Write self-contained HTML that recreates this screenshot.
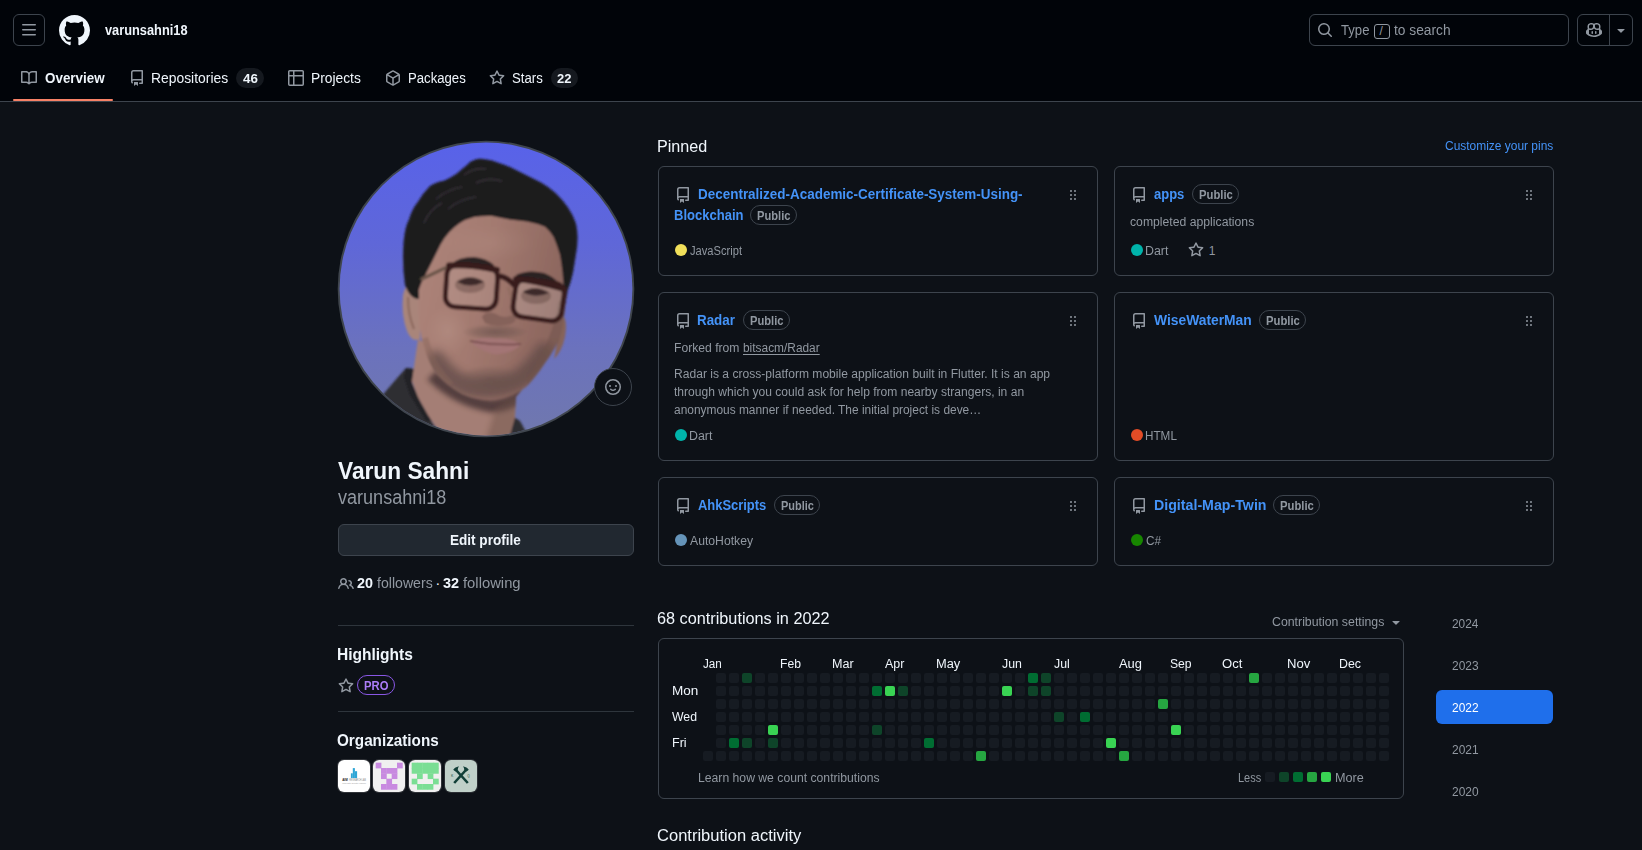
<!DOCTYPE html>
<html lang="en">
<head>
<meta charset="utf-8">
<title>varunsahni18 (Varun Sahni)</title>
<style>
*{box-sizing:border-box;margin:0;padding:0}
html,body{width:1642px;height:850px;overflow:hidden;background:#0d1117}
body{position:relative;font-family:"Liberation Sans",sans-serif;font-size:14px;color:#f0f6fc;line-height:1}
a{text-decoration:none}
.abs{position:absolute;display:block}
.t{position:absolute;white-space:nowrap;line-height:1;display:block;transform-origin:0 0}
.card{position:absolute;border:1px solid #3d444d;border-radius:6px}
.pill{position:absolute;border:1px solid #3d444d;border-radius:10px}
.cnt{position:absolute;height:20px;border-radius:10px;background:#15191f}
.d{position:absolute;width:10px;height:10px;border-radius:2px;background:#161b22}
.l1{background:#0e4429}.l2{background:#006d32}.l3{background:#26a641}.l4{background:#39d353}
.dot{position:absolute;width:12px;height:12px;border-radius:50%}
</style>
</head>
<body>
<div class="abs" style="left:0px;top:0px;width:1642px;height:101px;background:#010409"></div>
<div class="abs" style="left:0px;top:101px;width:1642px;height:1px;background:#3d444d"></div>
<div class="abs" style="left:13px;top:14px;width:32px;height:32px;border:1px solid #3d444d;border-radius:6px"></div>
<svg class="abs" style="left:21px;top:22px;fill:#9198a1" width="16" height="16" viewBox="0 0 16 16"><path d="M1 2.75A.75.75 0 0 1 1.75 2h12.5a.75.75 0 0 1 0 1.5H1.75A.75.75 0 0 1 1 2.75Zm0 5A.75.75 0 0 1 1.75 7h12.5a.75.75 0 0 1 0 1.5H1.75A.75.75 0 0 1 1 7.75ZM1.75 12h12.5a.75.75 0 0 1 0 1.5H1.75a.75.75 0 0 1 0-1.5Z"/></svg>
<svg class="abs" style="left:58.5px;top:14.5px;fill:#f0f6fc" width="31" height="31" viewBox="0 0 16 16"><path d="M8 0c4.42 0 8 3.58 8 8a8.013 8.013 0 0 1-5.45 7.59c-.4.08-.55-.17-.55-.38 0-.27.01-1.13.01-2.2 0-.75-.25-1.23-.54-1.48 1.78-.2 3.65-.88 3.65-3.95 0-.88-.31-1.59-.82-2.15.08-.2.36-1.02-.08-2.12 0 0-.67-.22-2.2.82-.64-.18-1.32-.27-2-.27-.68 0-1.36.09-2 .27-1.53-1.03-2.2-.82-2.2-.82-.44 1.1-.16 1.92-.08 2.12-.51.56-.82 1.28-.82 2.15 0 3.06 1.86 3.75 3.64 3.95-.23.2-.44.55-.51 1.07-.46.21-1.61.55-2.33-.66-.15-.24-.6-.83-1.23-.82-.67.01-.27.38.01.53.34.19.73.9.82 1.13.16.45.68 1.31 2.69.94 0 .67.01 1.3.01 1.49 0 .21-.15.45-.55.38A7.995 7.995 0 0 1 0 8c0-4.42 3.58-8 8-8Z"/></svg>
<span class="t" id="t0" style="left:104.82px;top:23.14px;font-size:14.00px;color:#f0f6fc;font-weight:bold;transform:scaleX(0.9144);">varunsahni18</span>
<svg class="abs" style="left:21px;top:70px;fill:#9198a1" width="16" height="16" viewBox="0 0 16 16"><path d="M0 1.75A.75.75 0 0 1 .75 1h4.253c1.227 0 2.317.59 3 1.501A3.743 3.743 0 0 1 11.006 1h4.245a.75.75 0 0 1 .75.75v10.5a.75.75 0 0 1-.75.75h-4.507a2.25 2.25 0 0 0-1.591.659l-.622.621a.75.75 0 0 1-1.06 0l-.622-.621A2.25 2.25 0 0 0 5.258 13H.75a.75.75 0 0 1-.75-.75Zm7.251 10.324.004-5.073-.002-2.253A2.25 2.25 0 0 0 5.003 2.5H1.5v9h3.757a3.75 3.75 0 0 1 1.994.574ZM8.755 4.75l-.004 7.322a3.752 3.752 0 0 1 1.992-.572H14.5v-9h-3.495a2.25 2.25 0 0 0-2.25 2.25Z"/></svg>
<span class="t" id="t1" style="left:45.00px;top:70.84px;font-size:14.00px;color:#f0f6fc;font-weight:bold;transform:scaleX(0.9572);">Overview</span>
<div class="abs" style="left:13px;top:99px;width:100px;height:2px;background:#f78166;border-radius:2px"></div>
<svg class="abs" style="left:129px;top:70px;fill:#9198a1" width="16" height="16" viewBox="0 0 16 16"><path d="M2 2.5A2.5 2.5 0 0 1 4.5 0h8.75a.75.75 0 0 1 .75.75v12.5a.75.75 0 0 1-.75.75h-2.5a.75.75 0 0 1 0-1.5h1.75v-2h-8a1 1 0 0 0-.714 1.7.75.75 0 1 1-1.072 1.05A2.495 2.495 0 0 1 2 11.5Zm10.5-1h-8a1 1 0 0 0-1 1v6.708A2.486 2.486 0 0 1 4.5 9h8ZM5 12.25a.25.25 0 0 1 .25-.25h3.5a.25.25 0 0 1 .25.25v3.25a.25.25 0 0 1-.4.2l-1.45-1.087a.249.249 0 0 0-.3 0L5.4 15.7a.25.25 0 0 1-.4-.2Z"/></svg>
<span class="t" id="t2" style="left:150.86px;top:70.84px;font-size:14.00px;color:#f0f6fc;transform:scaleX(0.9911);">Repositories</span>
<div class="cnt" style="left:236px;top:68px;width:28px"></div>
<span class="t" id="t3" style="left:242.82px;top:72.83px;font-size:12.00px;color:#f0f6fc;font-weight:bold;transform:scaleX(1.1162);">46</span>
<svg class="abs" style="left:288px;top:70px;fill:#9198a1" width="16" height="16" viewBox="0 0 16 16"><path d="M0 1.75C0 .784.784 0 1.75 0h12.5C15.216 0 16 .784 16 1.75v12.5A1.75 1.75 0 0 1 14.25 16H1.75A1.75 1.75 0 0 1 0 14.25ZM6.5 6.5v8h7.75a.25.25 0 0 0 .25-.25V6.5Zm8-1.5V1.75a.25.25 0 0 0-.25-.25H6.5V5Zm-13 1.5v7.75c0 .138.112.25.25.25H5v-8ZM5 5V1.5H1.75a.25.25 0 0 0-.25.25V5Z"/></svg>
<span class="t" id="t4" style="left:310.68px;top:70.84px;font-size:14.00px;color:#f0f6fc;transform:scaleX(0.9858);">Projects</span>
<svg class="abs" style="left:384.5px;top:70px;fill:#9198a1" width="16" height="16" viewBox="0 0 16 16"><path d="m8.878.392 5.25 3.045c.54.314.872.89.872 1.514v6.098a1.75 1.75 0 0 1-.872 1.514l-5.25 3.045a1.75 1.75 0 0 1-1.756 0l-5.25-3.045A1.75 1.75 0 0 1 1 11.049V4.951c0-.624.332-1.201.872-1.514L7.122.392a1.75 1.75 0 0 1 1.756 0ZM7.875 1.69l-4.63 2.685L8 7.133l4.755-2.758-4.63-2.685a.248.248 0 0 0-.25 0ZM2.5 5.677v5.372c0 .09.047.171.125.216l4.625 2.683V8.432Zm6.25 8.271 4.625-2.683a.25.25 0 0 0 .125-.216V5.677L8.75 8.432Z"/></svg>
<span class="t" id="t5" style="left:407.95px;top:70.84px;font-size:14.00px;color:#f0f6fc;transform:scaleX(0.9393);">Packages</span>
<svg class="abs" style="left:489px;top:70px;fill:#9198a1" width="16" height="16" viewBox="0 0 16 16"><path d="M8 .25a.75.75 0 0 1 .673.418l1.882 3.815 4.21.612a.75.75 0 0 1 .416 1.279l-3.046 2.97.719 4.192a.751.751 0 0 1-1.088.791L8 12.347l-3.766 1.98a.75.75 0 0 1-1.088-.79l.72-4.194L.818 6.374a.75.75 0 0 1 .416-1.28l4.21-.611L7.327.668A.75.75 0 0 1 8 .25Zm0 2.445L6.615 5.5a.75.75 0 0 1-.564.41l-3.097.45 2.24 2.184a.75.75 0 0 1 .216.664l-.528 3.084 2.769-1.456a.75.75 0 0 1 .698 0l2.77 1.456-.53-3.084a.75.75 0 0 1 .216-.664l2.24-2.183-3.096-.45a.75.75 0 0 1-.564-.41L8 2.694Z"/></svg>
<span class="t" id="t6" style="left:511.79px;top:70.84px;font-size:14.00px;color:#f0f6fc;transform:scaleX(0.9408);">Stars</span>
<div class="cnt" style="left:551px;top:68px;width:26.5px"></div>
<span class="t" id="t7" style="left:556.56px;top:72.83px;font-size:12.00px;color:#f0f6fc;font-weight:bold;transform:scaleX(1.0806);">22</span>
<div class="abs" style="left:1309px;top:14px;width:260px;height:32px;border:1px solid #3d444d;border-radius:6px"></div>
<svg class="abs" style="left:1316.5px;top:22px;fill:#9198a1" width="16" height="16" viewBox="0 0 16 16"><path d="M10.68 11.74a6 6 0 0 1-7.922-8.982 6 6 0 0 1 8.982 7.922l3.04 3.04a.749.749 0 0 1-.326 1.275.749.749 0 0 1-.734-.215ZM11.5 7a4.499 4.499 0 1 0-8.997 0A4.499 4.499 0 0 0 11.5 7Z"/></svg>
<span class="t" id="t8" style="left:1341.21px;top:23.14px;font-size:14.00px;color:#9198a1;transform:scaleX(0.9369);">Type</span>
<div class="abs" style="left:1374px;top:23.5px;width:16px;height:15px;border:1px solid #9198a1;border-radius:3px"></div>
<span class="t" id="t9" style="left:1379.60px;top:24.83px;font-size:12.00px;color:#9198a1;">/</span>
<span class="t" id="t10" style="left:1393.91px;top:23.14px;font-size:14.00px;color:#9198a1;transform:scaleX(0.9838);">to search</span>
<div class="abs" style="left:1577px;top:14px;width:56px;height:32px;border:1px solid #3d444d;border-radius:6px"></div>
<div class="abs" style="left:1609px;top:14px;width:1px;height:32px;background:#3d444d"></div>
<svg class="abs" style="left:1586px;top:22px;fill:#9198a1" width="16" height="16" viewBox="0 0 16 16"><path d="M7.998 15.035c-4.562 0-7.873-2.914-7.998-3.749V9.338c.085-.628.677-1.686 1.588-2.065.013-.07.024-.143.036-.218.029-.183.06-.384.126-.612-.201-.508-.254-1.084-.254-1.656 0-.87.128-1.769.693-2.484.579-.733 1.494-1.124 2.724-1.261 1.206-.134 2.262.034 2.944.765.05.053.096.108.139.165.044-.057.094-.112.143-.165.682-.731 1.738-.899 2.944-.765 1.23.137 2.145.528 2.724 1.261.566.715.693 1.614.693 2.484 0 .572-.053 1.148-.254 1.656.066.228.098.429.126.612.012.076.024.148.037.218.924.385 1.522 1.471 1.591 2.095v1.872c0 .766-3.351 3.795-8.002 3.795Zm0-1.485c2.28 0 4.584-1.11 5.002-1.433V7.862l-.023-.116c-.49.21-1.075.291-1.727.291-1.146 0-2.059-.327-2.71-.991A3.222 3.222 0 0 1 8 6.303a3.24 3.24 0 0 1-.544.743c-.65.664-1.563.991-2.71.991-.652 0-1.236-.081-1.727-.291l-.023.116v4.255c.419.323 2.722 1.433 5.002 1.433ZM6.762 2.83c-.193-.206-.637-.413-1.682-.297-1.019.113-1.479.404-1.713.7-.247.312-.369.789-.369 1.554 0 .793.129 1.171.308 1.371.162.181.519.379 1.442.379.853 0 1.339-.235 1.638-.54.315-.322.527-.827.617-1.553.117-.935-.037-1.395-.241-1.614Zm4.155-.297c-1.044-.116-1.488.091-1.681.297-.204.219-.359.679-.242 1.614.091.726.303 1.231.618 1.553.299.305.784.54 1.638.54.922 0 1.28-.198 1.442-.379.179-.2.308-.578.308-1.371 0-.765-.123-1.242-.37-1.554-.233-.296-.693-.587-1.713-.7ZM6.25 9.037a.75.75 0 0 1 .75.75v1.501a.75.75 0 0 1-1.5 0V9.787a.75.75 0 0 1 .75-.75Zm4.25.75v1.501a.75.75 0 0 1-1.5 0V9.787a.75.75 0 0 1 1.5 0Z"/></svg>
<svg class="abs" style="left:1613px;top:22px;fill:#9198a1" width="16" height="16" viewBox="0 0 16 16"><path d="m4.427 7.427 3.396 3.396a.25.25 0 0 0 .354 0l3.396-3.396A.25.25 0 0 0 11.396 7H4.604a.25.25 0 0 0-.177.427Z"/></svg>
<svg class="abs" style="left:336px;top:139px" width="300" height="300" viewBox="0 0 300 300">
<defs>
<linearGradient id="bg" x1="0" y1="0" x2="0" y2="1"><stop offset="0" stop-color="#5862ea"/><stop offset=".35" stop-color="#5f67d8"/><stop offset=".7" stop-color="#6b72bd"/><stop offset="1" stop-color="#7078ad"/></linearGradient>
<linearGradient id="skin" x1="0" y1="0" x2="1" y2=".3"><stop offset="0" stop-color="#ae857b"/><stop offset=".5" stop-color="#a37a70"/><stop offset="1" stop-color="#8c665e"/></linearGradient>
<radialGradient id="beard" cx=".5" cy=".5" r=".5"><stop offset="0" stop-color="#5f4a46" stop-opacity=".8"/><stop offset=".6" stop-color="#6a544e" stop-opacity=".5"/><stop offset="1" stop-color="#705a52" stop-opacity="0"/></radialGradient>
<radialGradient id="hl" cx=".5" cy=".5" r=".5"><stop offset="0" stop-color="#bc988c" stop-opacity=".7"/><stop offset="1" stop-color="#bc988c" stop-opacity="0"/></radialGradient>
<clipPath id="fc"><path d="M83 140 Q81 172 85 198 Q89 216 98 232 Q110 246 126 255 Q142 262 158 261 Q176 258 190 248 Q200 238 209 224 Q220 210 225 192 Q230 172 230 150 L228 110 L200 72 L130 70 L92 104Z"/></clipPath>
<clipPath id="nc"><path d="M82 200 L80 214 L76 242 L82 258 L92 276 L108 300 L173 300 L179 278 L180 258 L190 246 L140 236Z"/></clipPath>
<filter id="bl4" x="-20%" y="-40%" width="140%" height="180%"><feGaussianBlur stdDeviation="2.500"/></filter>
<clipPath id="cc"><circle cx="150" cy="150" r="146.4"/></clipPath>
<filter id="bl3" x="-20%" y="-40%" width="140%" height="180%"><feGaussianBlur stdDeviation="4"/></filter>
<filter id="bl" x="-5%" y="-5%" width="110%" height="110%"><feGaussianBlur stdDeviation=".8"/></filter>
</defs>
<circle cx="150" cy="150" r="148.3" fill="#3f454d"/>
<g clip-path="url(#cc)">
<rect width="300" height="300" fill="url(#bg)"/>
<g filter="url(#bl)">
<!-- shirt -->
<path d="M36 268 L50 252 L62 238 L70 229 L78 230 L76 244 L84 262 L94 280 L108 300 L30 300Z" fill="#2f2e33"/>
<path d="M70 229 L78 230 L76 244 L84 262 L96 282 L90 282 L74 256 L68 238Z" fill="#232226"/>
<path d="M172 300 L178 278 L184 282 L194 300Z" fill="#2f2e33"/>
<!-- neck -->
<path d="M82 200 L80 214 L76 242 L82 258 L92 276 L108 300 L173 300 L179 278 L180 258 L190 246 L140 236Z" fill="#a47e74"/>
<g clip-path="url(#nc)"><path d="M96 236 Q122 262 156 267 Q180 265 196 248" stroke="#3a2c2e" stroke-width="13" fill="none" opacity=".75" filter="url(#bl4)"/><path d="M150 300 L160 268 L182 256 L180 300Z" fill="#6e5248" opacity=".45" filter="url(#bl4)"/></g>
<!-- ears -->
<path d="M84 148 Q70 140 67 156 Q65 176 71 192 Q76 204 84 200Z" fill="#a9857a"/>
<path d="M72 158 Q72 176 78 190" stroke="#8a675c" stroke-width="2" fill="none"/>
<path d="M226 176 Q232 180 229 198 Q226 212 218 220Z" fill="#86645a"/>
<!-- face -->
<path d="M83 140 Q81 172 85 198 Q89 216 98 232 Q110 246 126 255 Q142 262 158 261 Q176 258 190 248 Q200 238 209 224 Q220 210 225 192 Q230 172 230 150 L228 110 L200 72 L130 70 L92 104Z" fill="url(#skin)"/>
<ellipse cx="152" cy="104" rx="48" ry="18" fill="url(#hl)" opacity=".3"/>
<ellipse cx="112" cy="192" rx="22" ry="26" fill="url(#hl)" opacity=".6"/>
<!-- stubble shading -->
<g clip-path="url(#fc)"><path d="M100 222 Q112 240 130 247 Q158 254 184 240 Q200 228 208 214" stroke="#5e4a46" stroke-width="20" fill="none" opacity=".75" filter="url(#bl3)" stroke-linecap="round"/></g>
<ellipse cx="154" cy="240" rx="34" ry="14" fill="url(#beard)" opacity=".6"/>
<ellipse cx="159" cy="193" rx="33" ry="8" fill="url(#beard)" opacity=".75"/>
<path d="M192 246 Q210 224 222 204 Q230 180 230 150 L222 164 Q218 200 190 240Z" fill="#6e5249" opacity=".5"/>
<path d="M86 200 Q92 226 112 246 L118 244 Q98 224 92 198Z" fill="#866458" opacity=".45"/>
<!-- hair -->
<path d="M69 146 Q66 124 67.700 102 Q69 88 73 80.600 Q76 70 81.800 63 Q87 54 94 47 Q100 43 108 41.800 Q114 39 120.600 34.700 Q126 30 131 26 Q134 22 138.300 21 Q143 19 149 20.200 Q156 21 163 24 Q170 26 177 29.400 L191 36.500 L205 43.500 Q213 48 219.500 54 Q226 60 231.800 68.300 Q237 76 239.800 84 Q241.500 91 241.500 98.300 Q241.500 108 239.800 116 L237 133.600 Q235 143 231.800 151 L229 166 Q228 150 226.500 133.600 Q225.500 124 224 116 Q221 106 217.700 98.300 Q214 92 209 87.700 Q200 84 191 82.400 L173.600 80.600 Q164 78.600 156 77 Q147 76.600 138.300 78 Q130 80 124 84 Q118 88 113.500 93 Q108 99 104.700 105.300 L97.700 119.400 L90.600 133.600 L85.300 144 L82.700 151 L83 160 Q74 160 69 146Z" fill="#1d1a1f"/>
<g stroke="#3b363c" stroke-width="1.6" fill="none" opacity=".8"><path d="M100 60 Q112 50 126 48"/><path d="M128 36 Q138 28 150 30"/><path d="M140 44 Q152 38 166 42"/><path d="M88 84 Q94 70 106 64"/><path d="M112 70 Q124 60 140 58"/></g>
<!-- brows -->
<path d="M116 125 Q122 118 138 118 Q150 119 158 126 L156 130 Q142 124 128 125 Q120 126 117 129Z" fill="#2a2022"/>
<path d="M180 136 Q192 130 208 134 Q216 137 222 143 L220 146 Q208 140 196 139 Q188 139 182 141Z" fill="#2a2022"/>
<!-- lenses tint -->
<rect x="110" y="127" width="51" height="42" rx="10" fill="#fff" opacity=".10" transform="rotate(4 135 148)"/>
<rect x="178" y="142" width="49" height="38" rx="10" fill="#fff" opacity=".17" transform="rotate(8 202 162)"/>
<!-- eyes -->
<path d="M121 143 Q134 134 148 143 Q134 150 121 143Z" fill="#2a1c1e"/><ellipse cx="134" cy="146" rx="15" ry="8" fill="#5a403c" opacity=".4"/>
<path d="M187 153 Q199 145 213 154 Q199 160 187 153Z" fill="#2a1c1e"/><ellipse cx="200" cy="157" rx="15" ry="8" fill="#5a403c" opacity=".4"/>
<!-- nose -->
<path d="M146 178 Q150 171 160 175 Q168 181 179 175 Q182 182 175 185 Q160 189 149 184Z" fill="#85625a"/>
<path d="M172 148 Q177 162 179 174" stroke="#8e6a5e" stroke-width="3" fill="none" opacity=".6"/>
<!-- mouth -->
<path d="M134 202 Q148 197 160 199.500 Q172 198 185 205 Q178 214 160 215.500 Q144 213 134 202Z" fill="#a37474"/>
<path d="M134 202 Q160 207 185 205" stroke="#6e4646" stroke-width="1.600" fill="none"/>
<!-- glasses -->
<path d="M109 129 L86 140" stroke="#6a5548" stroke-width="3.400" fill="none" stroke-linecap="round"/>
<g fill="none" stroke="#371c1d" stroke-width="4.800" stroke-linejoin="round" stroke-linecap="round">
<rect x="110" y="127" width="51" height="42" rx="10" transform="rotate(4 135 148)"/>
<rect x="178" y="142" width="49" height="38" rx="10" transform="rotate(8 202 162)"/>
<path d="M113 126.500 Q136 125 161 131" stroke-width="6"/>
<path d="M180 140 Q202 142 228 150" stroke-width="6"/>
<path d="M162 137 Q170 137 178 146" stroke-width="5.500"/>
</g>
</g>
</g></svg>

<div class="abs" style="left:594px;top:368px;width:38px;height:38px;border:1px solid #3d444d;border-radius:50%;background:#0d1117"></div>
<svg class="abs" style="left:605px;top:379px;fill:#9198a1" width="16" height="16" viewBox="0 0 16 16"><path d="M8 0a8 8 0 1 1 0 16A8 8 0 0 1 8 0ZM1.5 8a6.5 6.5 0 1 0 13 0 6.5 6.5 0 0 0-13 0Zm3.82 1.636a.75.75 0 0 1 1.038.175l.007.009c.103.118.22.222.35.31.264.178.683.37 1.285.37.602 0 1.02-.192 1.285-.371.13-.088.247-.192.35-.31l.007-.008a.75.75 0 0 1 1.222.87l-.614-.431c.614.43.614.431.613.431v.001l-.001.002-.002.003-.005.007-.014.019a2.066 2.066 0 0 1-.184.213c-.16.166-.338.316-.53.445-.63.418-1.37.638-2.127.629-.946 0-1.652-.308-2.126-.63a3.331 3.331 0 0 1-.715-.657l-.014-.02-.005-.006-.002-.003v-.002h-.001l.613-.432-.614.43a.75.75 0 0 1 .183-1.044ZM12 7a1 1 0 1 1-2 0 1 1 0 0 1 2 0ZM5 8a1 1 0 1 1 0-2 1 1 0 0 1 0 2Z"/></svg>
<span class="t" id="t11" style="left:337.71px;top:458.88px;font-size:24.00px;color:#f0f6fc;font-weight:bold;transform:scaleX(0.9459);">Varun Sahni</span>
<span class="t" id="t12" style="left:337.82px;top:486.66px;font-size:20.00px;color:#9198a1;transform:scaleX(0.9021);">varunsahni18</span>
<div class="abs" style="left:338px;top:524px;width:296px;height:32px;border:1px solid #3d444d;border-radius:6px;background:#212830"></div>
<span class="t" id="t13" style="left:450.38px;top:533.14px;font-size:14.00px;color:#f0f6fc;font-weight:bold;transform:scaleX(0.9681);">Edit profile</span>
<svg class="abs" style="left:338px;top:575.5px;fill:#9198a1" width="16" height="16" viewBox="0 0 16 16"><path d="M2 5.5a3.5 3.5 0 1 1 5.898 2.549 5.508 5.508 0 0 1 3.034 4.084.75.75 0 1 1-1.482.235 4 4 0 0 0-7.9 0 .75.75 0 0 1-1.482-.236A5.507 5.507 0 0 1 3.102 8.05 3.493 3.493 0 0 1 2 5.5ZM11 4a3.001 3.001 0 0 1 2.22 5.018 5.01 5.01 0 0 1 2.56 3.012.749.749 0 0 1-.885.954.752.752 0 0 1-.549-.514 3.507 3.507 0 0 0-2.522-2.372.75.75 0 0 1-.574-.73v-.352a.75.75 0 0 1 .416-.672A1.5 1.5 0 0 0 11 5.5.75.75 0 0 1 11 4Zm-5.5-.5a2 2 0 1 0-.001 3.999A2 2 0 0 0 5.500 3.500Z"/></svg>
<span class="t" id="t14" style="left:357.22px;top:576.14px;font-size:14.00px;color:#f0f6fc;font-weight:bold;transform:scaleX(1.0232);">20</span>
<span class="t" id="t15" style="left:377.13px;top:576.14px;font-size:14.00px;color:#9198a1;transform:scaleX(1.0080);">followers</span>
<span class="t" id="t16" style="left:435.40px;top:576.14px;font-size:14.00px;color:#f0f6fc;">·</span>
<span class="t" id="t17" style="left:442.76px;top:576.14px;font-size:14.00px;color:#f0f6fc;font-weight:bold;transform:scaleX(1.0298);">32</span>
<span class="t" id="t18" style="left:462.89px;top:576.14px;font-size:14.00px;color:#9198a1;transform:scaleX(1.0575);">following</span>
<div class="abs" style="left:338px;top:625px;width:296px;height:1px;background:#3d444db3"></div>
<span class="t" id="t19" style="left:336.96px;top:646.75px;font-size:16.00px;color:#f0f6fc;font-weight:bold;transform:scaleX(0.9704);">Highlights</span>
<svg class="abs" style="left:338px;top:677.5px;fill:#9198a1" width="16" height="16" viewBox="0 0 16 16"><path d="M8 .25a.75.75 0 0 1 .673.418l1.882 3.815 4.21.612a.75.75 0 0 1 .416 1.279l-3.046 2.97.719 4.192a.751.751 0 0 1-1.088.791L8 12.347l-3.766 1.98a.75.75 0 0 1-1.088-.79l.72-4.194L.818 6.374a.75.75 0 0 1 .416-1.28l4.21-.611L7.327.668A.75.75 0 0 1 8 .25Zm0 2.445L6.615 5.5a.75.75 0 0 1-.564.41l-3.097.45 2.24 2.184a.75.75 0 0 1 .216.664l-.528 3.084 2.769-1.456a.75.75 0 0 1 .698 0l2.77 1.456-.53-3.084a.75.75 0 0 1 .216-.664l2.24-2.183-3.096-.45a.75.75 0 0 1-.564-.41L8 2.694Z"/></svg>
<div class="abs" style="left:357px;top:675px;width:38px;height:20px;border:1px solid #8957e5;border-radius:10px"></div>
<span class="t" id="t20" style="left:364.11px;top:679.83px;font-size:12.00px;color:#ab7df8;font-weight:bold;transform:scaleX(0.9410);">PRO</span>
<div class="abs" style="left:338px;top:711px;width:296px;height:1px;background:#3d444db3"></div>
<span class="t" id="t21" style="left:337.26px;top:733.36px;font-size:16.00px;color:#f0f6fc;font-weight:bold;transform:scaleX(0.9537);">Organizations</span>
<svg class="abs" style="left:338px;top:760px;border-radius:6px;box-shadow:0 0 0 1px rgba(255,255,255,.15)" width="32" height="32" viewBox="0 0 32 32"><rect width="32" height="32" fill="#fff"/>
<g fill="#2ea6d6"><rect x="14.8" y="8.1" width="2.1" height="10"/><rect x="16.9" y="11.2" width="2.2" height="6.9"/><rect x="12.9" y="13.3" width="1.9" height="4.8"/></g>
<text x="4.2" y="21.2" font-family="Liberation Sans, sans-serif" font-size="3" font-weight="bold" fill="#222">AIM</text>
<text x="11.3" y="21.2" font-family="Liberation Sans, sans-serif" font-size="3" fill="#888" textLength="16.6" lengthAdjust="spacingAndGlyphs">RESEARCH LAB</text>
<text x="4.2" y="23.9" font-family="Liberation Sans, sans-serif" font-size="2.4" fill="#999" textLength="23.8" lengthAdjust="spacingAndGlyphs">Innovate Create Inspire</text>
</svg>
<svg class="abs" style="left:373.3px;top:760px;border-radius:6px;box-shadow:0 0 0 1px rgba(255,255,255,.15)" width="32" height="32" viewBox="0 0 32 32"><rect width="32" height="32" fill="#f0f0f0"/><g fill="#c88ae0"><rect x="2.67" y="2.67" width="5.73" height="5.73"/><rect x="24.00" y="2.67" width="5.73" height="5.73"/><rect x="8.00" y="8.00" width="5.73" height="5.73"/><rect x="13.34" y="8.00" width="5.73" height="5.73"/><rect x="18.67" y="8.00" width="5.73" height="5.73"/><rect x="8.00" y="13.34" width="5.73" height="5.73"/><rect x="18.67" y="13.34" width="5.73" height="5.73"/><rect x="13.34" y="18.67" width="5.73" height="5.73"/><rect x="8.00" y="24.00" width="5.73" height="5.73"/><rect x="13.34" y="24.00" width="5.73" height="5.73"/><rect x="18.67" y="24.00" width="5.73" height="5.73"/></g></svg>
<svg class="abs" style="left:409px;top:760px;border-radius:6px;box-shadow:0 0 0 1px rgba(255,255,255,.15)" width="32" height="32" viewBox="0 0 32 32"><rect width="32" height="32" fill="#f0f0f0"/><g fill="#7ade94"><rect x="2.67" y="2.67" width="5.73" height="5.73"/><rect x="8.00" y="2.67" width="5.73" height="5.73"/><rect x="13.34" y="2.67" width="5.73" height="5.73"/><rect x="18.67" y="2.67" width="5.73" height="5.73"/><rect x="24.00" y="2.67" width="5.73" height="5.73"/><rect x="2.67" y="8.00" width="5.73" height="5.73"/><rect x="8.00" y="8.00" width="5.73" height="5.73"/><rect x="13.34" y="8.00" width="5.73" height="5.73"/><rect x="18.67" y="8.00" width="5.73" height="5.73"/><rect x="24.00" y="8.00" width="5.73" height="5.73"/><rect x="8.00" y="13.34" width="5.73" height="5.73"/><rect x="18.67" y="13.34" width="5.73" height="5.73"/><rect x="2.67" y="18.67" width="5.73" height="5.73"/><rect x="24.00" y="18.67" width="5.73" height="5.73"/><rect x="8.00" y="24.00" width="5.73" height="5.73"/><rect x="13.34" y="24.00" width="5.73" height="5.73"/><rect x="18.67" y="24.00" width="5.73" height="5.73"/></g></svg>
<svg class="abs" style="left:445px;top:760px;border-radius:6px;box-shadow:0 0 0 1px rgba(255,255,255,.12)" width="32" height="32" viewBox="0 0 32 32"><rect width="32" height="32" fill="#c0d0c9"/>
<g stroke="#123f38" stroke-width="2.6" stroke-linecap="butt" fill="none"><path d="M9.2 23 L22.3 8.5"/><path d="M22.8 23 L9.7 8.5"/></g>
<g fill="#123f38"><path d="M8.2 9.8 Q10 7 14 6.2 Q12.5 8 12.6 10.6 L10.4 11.6Z"/><path d="M23.8 9.8 Q22 7 18 6.2 Q19.500 8 19.400 10.600 L21.600 11.600Z"/></g>
<text x="6" y="17.4" font-family="Liberation Sans, sans-serif" font-size="3.2" font-weight="bold" fill="#4f7a6c">K</text>
<text x="22.3" y="17.400" font-family="Liberation Sans, sans-serif" font-size="3.2" font-weight="bold" fill="#4f7a6c">Q</text>
</svg>
<span class="t" id="t22" style="left:656.71px;top:138.66px;font-size:16.00px;color:#f0f6fc;transform:scaleX(1.0102);">Pinned</span>
<span class="t" id="t23" style="left:1445.43px;top:140.03px;font-size:12.00px;color:#4493f8;transform:scaleX(0.9959);">Customize your pins</span>
<div class="card" style="left:658px;top:166px;width:440px;height:110px"></div>
<svg class="abs" style="left:675px;top:187px;fill:#9198a1" width="16" height="16" viewBox="0 0 16 16"><path d="M2 2.5A2.5 2.5 0 0 1 4.5 0h8.75a.75.75 0 0 1 .75.75v12.5a.75.75 0 0 1-.75.75h-2.5a.75.75 0 0 1 0-1.5h1.75v-2h-8a1 1 0 0 0-.714 1.7.75.75 0 1 1-1.072 1.05A2.495 2.495 0 0 1 2 11.5Zm10.5-1h-8a1 1 0 0 0-1 1v6.708A2.486 2.486 0 0 1 4.5 9h8ZM5 12.25a.25.25 0 0 1 .25-.25h3.5a.25.25 0 0 1 .25.25v3.25a.25.25 0 0 1-.4.2l-1.45-1.087a.249.249 0 0 0-.3 0L5.4 15.7a.25.25 0 0 1-.4-.2Z"/></svg>
<span class="t" id="t24" style="left:697.79px;top:187.34px;font-size:14.00px;color:#4493f8;font-weight:bold;transform:scaleX(0.9613);">Decentralized-Academic-Certificate-System-Using-</span>
<span class="t" id="t25" style="left:673.76px;top:208.34px;font-size:14.00px;color:#4493f8;font-weight:bold;transform:scaleX(0.9308);">Blockchain</span>
<div class="pill" style="left:750px;top:205px;width:46.5px;height:20px"></div>
<span class="t" id="t26" style="left:756.94px;top:209.83px;font-size:12.00px;color:#9198a1;font-weight:bold;transform:scaleX(0.9281);">Public</span>
<svg class="abs" style="left:1065px;top:187px;fill:#9198a1" width="16" height="16" viewBox="0 0 16 16"><path d="M10 13a1 1 0 1 1 0-2 1 1 0 0 1 0 2Zm0-4a1 1 0 1 1 0-2 1 1 0 0 1 0 2Zm-4 4a1 1 0 1 1 0-2 1 1 0 0 1 0 2Zm5-9a1 1 0 1 1-2 0 1 1 0 0 1 2 0ZM7 8a1 1 0 1 1-2 0 1 1 0 0 1 2 0ZM6 5a1 1 0 1 1 0-2 1 1 0 0 1 0 2Z"/></svg>
<div class="dot" style="left:675px;top:244px;background:#f1e05a"></div>
<span class="t" id="t27" style="left:690.36px;top:244.53px;font-size:12.00px;color:#9198a1;transform:scaleX(0.9279);">JavaScript</span>
<div class="card" style="left:1114px;top:166px;width:440px;height:110px"></div>
<svg class="abs" style="left:1131px;top:187px;fill:#9198a1" width="16" height="16" viewBox="0 0 16 16"><path d="M2 2.5A2.5 2.5 0 0 1 4.5 0h8.75a.75.75 0 0 1 .75.75v12.5a.75.75 0 0 1-.75.75h-2.5a.75.75 0 0 1 0-1.5h1.75v-2h-8a1 1 0 0 0-.714 1.7.75.75 0 1 1-1.072 1.05A2.495 2.495 0 0 1 2 11.5Zm10.5-1h-8a1 1 0 0 0-1 1v6.708A2.486 2.486 0 0 1 4.5 9h8ZM5 12.25a.25.25 0 0 1 .25-.25h3.5a.25.25 0 0 1 .25.25v3.25a.25.25 0 0 1-.4.2l-1.45-1.087a.249.249 0 0 0-.3 0L5.4 15.7a.25.25 0 0 1-.4-.2Z"/></svg>
<span class="t" id="t28" style="left:1154.36px;top:187.34px;font-size:14.00px;color:#4493f8;font-weight:bold;transform:scaleX(0.9291);">apps</span>
<div class="pill" style="left:1192px;top:184px;width:47px;height:20px"></div>
<span class="t" id="t29" style="left:1198.93px;top:188.83px;font-size:12.00px;color:#9198a1;font-weight:bold;transform:scaleX(0.9390);">Public</span>
<span class="t" id="t30" style="left:1130.17px;top:215.62px;font-size:12.00px;color:#9198a1;transform:scaleX(1.0178);">completed applications</span>
<svg class="abs" style="left:1521px;top:187px;fill:#9198a1" width="16" height="16" viewBox="0 0 16 16"><path d="M10 13a1 1 0 1 1 0-2 1 1 0 0 1 0 2Zm0-4a1 1 0 1 1 0-2 1 1 0 0 1 0 2Zm-4 4a1 1 0 1 1 0-2 1 1 0 0 1 0 2Zm5-9a1 1 0 1 1-2 0 1 1 0 0 1 2 0ZM7 8a1 1 0 1 1-2 0 1 1 0 0 1 2 0ZM6 5a1 1 0 1 1 0-2 1 1 0 0 1 0 2Z"/></svg>
<div class="dot" style="left:1131px;top:244px;background:#00b4ab"></div>
<span class="t" id="t31" style="left:1145.26px;top:244.53px;font-size:12.00px;color:#9198a1;transform:scaleX(1.0339);">Dart</span>
<svg class="abs" style="left:1188px;top:241.5px;fill:#9198a1" width="16" height="16" viewBox="0 0 16 16"><path d="M8 .25a.75.75 0 0 1 .673.418l1.882 3.815 4.21.612a.75.75 0 0 1 .416 1.279l-3.046 2.97.719 4.192a.751.751 0 0 1-1.088.791L8 12.347l-3.766 1.98a.75.75 0 0 1-1.088-.79l.72-4.194L.818 6.374a.75.75 0 0 1 .416-1.28l4.21-.611L7.327.668A.75.75 0 0 1 8 .25Zm0 2.445L6.615 5.5a.75.75 0 0 1-.564.41l-3.097.45 2.24 2.184a.75.75 0 0 1 .216.664l-.528 3.084 2.769-1.456a.75.75 0 0 1 .698 0l2.77 1.456-.53-3.084a.75.75 0 0 1 .216-.664l2.24-2.183-3.096-.45a.75.75 0 0 1-.564-.41L8 2.694Z"/></svg>
<span class="t" id="t32" style="left:1208.70px;top:244.53px;font-size:12.00px;color:#9198a1;">1</span>
<div class="card" style="left:658px;top:292px;width:440px;height:169px"></div>
<svg class="abs" style="left:675px;top:313px;fill:#9198a1" width="16" height="16" viewBox="0 0 16 16"><path d="M2 2.5A2.5 2.5 0 0 1 4.5 0h8.75a.75.75 0 0 1 .75.75v12.5a.75.75 0 0 1-.75.75h-2.5a.75.75 0 0 1 0-1.5h1.75v-2h-8a1 1 0 0 0-.714 1.7.75.75 0 1 1-1.072 1.05A2.495 2.495 0 0 1 2 11.5Zm10.5-1h-8a1 1 0 0 0-1 1v6.708A2.486 2.486 0 0 1 4.5 9h8ZM5 12.25a.25.25 0 0 1 .25-.25h3.5a.25.25 0 0 1 .25.25v3.25a.25.25 0 0 1-.4.2l-1.45-1.087a.249.249 0 0 0-.3 0L5.4 15.7a.25.25 0 0 1-.4-.2Z"/></svg>
<span class="t" id="t33" style="left:697.44px;top:313.14px;font-size:14.00px;color:#4493f8;font-weight:bold;transform:scaleX(0.9562);">Radar</span>
<div class="pill" style="left:743px;top:310px;width:46.5px;height:20px"></div>
<span class="t" id="t34" style="left:749.94px;top:314.83px;font-size:12.00px;color:#9198a1;font-weight:bold;transform:scaleX(0.9281);">Public</span>
<svg class="abs" style="left:1065px;top:313px;fill:#9198a1" width="16" height="16" viewBox="0 0 16 16"><path d="M10 13a1 1 0 1 1 0-2 1 1 0 0 1 0 2Zm0-4a1 1 0 1 1 0-2 1 1 0 0 1 0 2Zm-4 4a1 1 0 1 1 0-2 1 1 0 0 1 0 2Zm5-9a1 1 0 1 1-2 0 1 1 0 0 1 2 0ZM7 8a1 1 0 1 1-2 0 1 1 0 0 1 2 0ZM6 5a1 1 0 1 1 0-2 1 1 0 0 1 0 2Z"/></svg>
<span class="t" id="t35" style="left:674.03px;top:342.03px;font-size:12.00px;color:#9198a1;transform:scaleX(1.0123);">Forked from</span>
<span class="t" id="t36" style="left:742.74px;top:342.03px;font-size:12.00px;color:#9198a1;transform:scaleX(0.9913);text-decoration:underline;text-underline-offset:2px;">bitsacm/Radar</span>
<span class="t" id="t37" style="left:673.52px;top:368.12px;font-size:12.00px;color:#9198a1;transform:scaleX(1.0069);">Radar is a cross-platform mobile application built in Flutter. It is an app</span>
<span class="t" id="t38" style="left:674.37px;top:386.03px;font-size:12.00px;color:#9198a1;transform:scaleX(1.0055);">through which you could ask for help from nearby strangers, in an</span>
<span class="t" id="t39" style="left:673.69px;top:403.73px;font-size:12.00px;color:#9198a1;transform:scaleX(0.9931);">anonymous manner if needed. The initial project is deve…</span>
<div class="dot" style="left:675px;top:429px;background:#00b4ab"></div>
<span class="t" id="t40" style="left:689.40px;top:429.53px;font-size:12.00px;color:#9198a1;transform:scaleX(1.0306);">Dart</span>
<div class="card" style="left:1114px;top:292px;width:440px;height:169px"></div>
<svg class="abs" style="left:1131px;top:313px;fill:#9198a1" width="16" height="16" viewBox="0 0 16 16"><path d="M2 2.5A2.5 2.5 0 0 1 4.5 0h8.75a.75.75 0 0 1 .75.75v12.5a.75.75 0 0 1-.75.75h-2.5a.75.75 0 0 1 0-1.5h1.75v-2h-8a1 1 0 0 0-.714 1.7.75.75 0 1 1-1.072 1.05A2.495 2.495 0 0 1 2 11.5Zm10.5-1h-8a1 1 0 0 0-1 1v6.708A2.486 2.486 0 0 1 4.5 9h8ZM5 12.25a.25.25 0 0 1 .25-.25h3.5a.25.25 0 0 1 .25.25v3.25a.25.25 0 0 1-.4.2l-1.45-1.087a.249.249 0 0 0-.3 0L5.4 15.7a.25.25 0 0 1-.4-.2Z"/></svg>
<span class="t" id="t41" style="left:1154.08px;top:313.14px;font-size:14.00px;color:#4493f8;font-weight:bold;transform:scaleX(0.9878);">WiseWaterMan</span>
<div class="pill" style="left:1259px;top:310px;width:47px;height:20px"></div>
<span class="t" id="t42" style="left:1265.93px;top:314.83px;font-size:12.00px;color:#9198a1;font-weight:bold;transform:scaleX(0.9390);">Public</span>
<svg class="abs" style="left:1521px;top:313px;fill:#9198a1" width="16" height="16" viewBox="0 0 16 16"><path d="M10 13a1 1 0 1 1 0-2 1 1 0 0 1 0 2Zm0-4a1 1 0 1 1 0-2 1 1 0 0 1 0 2Zm-4 4a1 1 0 1 1 0-2 1 1 0 0 1 0 2Zm5-9a1 1 0 1 1-2 0 1 1 0 0 1 2 0ZM7 8a1 1 0 1 1-2 0 1 1 0 0 1 2 0ZM6 5a1 1 0 1 1 0-2 1 1 0 0 1 0 2Z"/></svg>
<div class="dot" style="left:1131px;top:429px;background:#e34c26"></div>
<span class="t" id="t43" style="left:1145.18px;top:429.53px;font-size:12.00px;color:#9198a1;transform:scaleX(0.9766);">HTML</span>
<div class="card" style="left:658px;top:477px;width:440px;height:89px"></div>
<svg class="abs" style="left:675px;top:498px;fill:#9198a1" width="16" height="16" viewBox="0 0 16 16"><path d="M2 2.5A2.5 2.5 0 0 1 4.5 0h8.75a.75.75 0 0 1 .75.75v12.5a.75.75 0 0 1-.75.75h-2.5a.75.75 0 0 1 0-1.5h1.75v-2h-8a1 1 0 0 0-.714 1.7.75.75 0 1 1-1.072 1.05A2.495 2.495 0 0 1 2 11.5Zm10.5-1h-8a1 1 0 0 0-1 1v6.708A2.486 2.486 0 0 1 4.5 9h8ZM5 12.25a.25.25 0 0 1 .25-.25h3.5a.25.25 0 0 1 .25.25v3.25a.25.25 0 0 1-.4.2l-1.45-1.087a.249.249 0 0 0-.3 0L5.4 15.7a.25.25 0 0 1-.4-.2Z"/></svg>
<span class="t" id="t44" style="left:697.57px;top:497.94px;font-size:14.00px;color:#4493f8;font-weight:bold;transform:scaleX(0.9234);">AhkScripts</span>
<div class="pill" style="left:774px;top:495px;width:46px;height:20px"></div>
<span class="t" id="t45" style="left:780.58px;top:499.83px;font-size:12.00px;color:#9198a1;font-weight:bold;transform:scaleX(0.9135);">Public</span>
<svg class="abs" style="left:1065px;top:498px;fill:#9198a1" width="16" height="16" viewBox="0 0 16 16"><path d="M10 13a1 1 0 1 1 0-2 1 1 0 0 1 0 2Zm0-4a1 1 0 1 1 0-2 1 1 0 0 1 0 2Zm-4 4a1 1 0 1 1 0-2 1 1 0 0 1 0 2Zm5-9a1 1 0 1 1-2 0 1 1 0 0 1 2 0ZM7 8a1 1 0 1 1-2 0 1 1 0 0 1 2 0ZM6 5a1 1 0 1 1 0-2 1 1 0 0 1 0 2Z"/></svg>
<div class="dot" style="left:675px;top:534px;background:#6594b9"></div>
<span class="t" id="t46" style="left:689.84px;top:534.53px;font-size:12.00px;color:#9198a1;transform:scaleX(1.0170);">AutoHotkey</span>
<div class="card" style="left:1114px;top:477px;width:440px;height:89px"></div>
<svg class="abs" style="left:1131px;top:498px;fill:#9198a1" width="16" height="16" viewBox="0 0 16 16"><path d="M2 2.5A2.5 2.5 0 0 1 4.5 0h8.75a.75.75 0 0 1 .75.75v12.5a.75.75 0 0 1-.75.75h-2.5a.75.75 0 0 1 0-1.5h1.75v-2h-8a1 1 0 0 0-.714 1.7.75.75 0 1 1-1.072 1.05A2.495 2.495 0 0 1 2 11.5Zm10.5-1h-8a1 1 0 0 0-1 1v6.708A2.486 2.486 0 0 1 4.5 9h8ZM5 12.25a.25.25 0 0 1 .25-.25h3.5a.25.25 0 0 1 .25.25v3.25a.25.25 0 0 1-.4.2l-1.45-1.087a.249.249 0 0 0-.3 0L5.4 15.7a.25.25 0 0 1-.4-.2Z"/></svg>
<span class="t" id="t47" style="left:1153.66px;top:497.94px;font-size:14.00px;color:#4493f8;font-weight:bold;transform:scaleX(1.0141);">Digital-Map-Twin</span>
<div class="pill" style="left:1273px;top:495px;width:47px;height:20px"></div>
<span class="t" id="t48" style="left:1279.93px;top:499.83px;font-size:12.00px;color:#9198a1;font-weight:bold;transform:scaleX(0.9390);">Public</span>
<svg class="abs" style="left:1521px;top:498px;fill:#9198a1" width="16" height="16" viewBox="0 0 16 16"><path d="M10 13a1 1 0 1 1 0-2 1 1 0 0 1 0 2Zm0-4a1 1 0 1 1 0-2 1 1 0 0 1 0 2Zm-4 4a1 1 0 1 1 0-2 1 1 0 0 1 0 2Zm5-9a1 1 0 1 1-2 0 1 1 0 0 1 2 0ZM7 8a1 1 0 1 1-2 0 1 1 0 0 1 2 0ZM6 5a1 1 0 1 1 0-2 1 1 0 0 1 0 2Z"/></svg>
<div class="dot" style="left:1131px;top:534px;background:#178600"></div>
<span class="t" id="t49" style="left:1146.27px;top:534.53px;font-size:12.00px;color:#9198a1;transform:scaleX(0.9801);">C#</span>
<span class="t" id="t50" style="left:656.78px;top:610.55px;font-size:16.00px;color:#f0f6fc;transform:scaleX(1.0155);">68 contributions in 2022</span>
<span class="t" id="t51" style="left:1271.61px;top:615.83px;font-size:12.00px;color:#9198a1;transform:scaleX(1.0269);">Contribution settings</span>
<svg class="abs" style="left:1388px;top:614px;fill:#9198a1" width="16" height="16" viewBox="0 0 16 16"><path d="m4.427 7.427 3.396 3.396a.25.25 0 0 0 .354 0l3.396-3.396A.25.25 0 0 0 11.396 7H4.604a.25.25 0 0 0-.177.427Z"/></svg>
<div class="card" style="left:658px;top:638px;width:746px;height:161px"></div>
<span class="t" id="t52" style="left:702.54px;top:658.44px;font-size:12.00px;color:#f0f6fc;transform:scaleX(0.9729);">Jan</span>
<span class="t" id="t53" style="left:779.93px;top:658.44px;font-size:12.00px;color:#f0f6fc;transform:scaleX(1.0122);">Feb</span>
<span class="t" id="t54" style="left:831.86px;top:658.44px;font-size:12.00px;color:#f0f6fc;transform:scaleX(1.0489);">Mar</span>
<span class="t" id="t55" style="left:884.82px;top:658.44px;font-size:12.00px;color:#f0f6fc;transform:scaleX(1.0340);">Apr</span>
<span class="t" id="t56" style="left:935.88px;top:658.44px;font-size:12.00px;color:#f0f6fc;transform:scaleX(1.0716);">May</span>
<span class="t" id="t57" style="left:1001.50px;top:658.44px;font-size:12.00px;color:#f0f6fc;transform:scaleX(1.0269);">Jun</span>
<span class="t" id="t58" style="left:1053.51px;top:658.44px;font-size:12.00px;color:#f0f6fc;transform:scaleX(1.0276);">Jul</span>
<span class="t" id="t59" style="left:1118.61px;top:658.44px;font-size:12.00px;color:#f0f6fc;transform:scaleX(1.0762);">Aug</span>
<span class="t" id="t60" style="left:1169.87px;top:658.44px;font-size:12.00px;color:#f0f6fc;transform:scaleX(1.0133);">Sep</span>
<span class="t" id="t61" style="left:1222.49px;top:658.44px;font-size:12.00px;color:#f0f6fc;transform:scaleX(1.0870);">Oct</span>
<span class="t" id="t62" style="left:1286.75px;top:658.44px;font-size:12.00px;color:#f0f6fc;transform:scaleX(1.0907);">Nov</span>
<span class="t" id="t63" style="left:1338.91px;top:658.44px;font-size:12.00px;color:#f0f6fc;transform:scaleX(1.0301);">Dec</span>
<span class="t" id="t64" style="left:671.58px;top:684.83px;font-size:12.00px;color:#f0f6fc;transform:scaleX(1.1269);">Mon</span>
<span class="t" id="t65" style="left:672.02px;top:710.73px;font-size:12.00px;color:#f0f6fc;transform:scaleX(1.0226);">Wed</span>
<span class="t" id="t66" style="left:671.66px;top:736.83px;font-size:12.00px;color:#f0f6fc;transform:scaleX(1.0483);">Fri</span>
<i class="d" style="left:703px;top:751px"></i><i class="d" style="left:716px;top:673px"></i><i class="d" style="left:716px;top:686px"></i><i class="d" style="left:716px;top:699px"></i><i class="d" style="left:716px;top:712px"></i><i class="d" style="left:716px;top:725px"></i><i class="d" style="left:716px;top:738px"></i><i class="d" style="left:716px;top:751px"></i><i class="d" style="left:729px;top:673px"></i><i class="d" style="left:729px;top:686px"></i><i class="d" style="left:729px;top:699px"></i><i class="d" style="left:729px;top:712px"></i><i class="d" style="left:729px;top:725px"></i><i class="d l2" style="left:729px;top:738px"></i><i class="d" style="left:729px;top:751px"></i><i class="d l1" style="left:742px;top:673px"></i><i class="d" style="left:742px;top:686px"></i><i class="d" style="left:742px;top:699px"></i><i class="d" style="left:742px;top:712px"></i><i class="d" style="left:742px;top:725px"></i><i class="d l1" style="left:742px;top:738px"></i><i class="d" style="left:742px;top:751px"></i><i class="d" style="left:755px;top:673px"></i><i class="d" style="left:755px;top:686px"></i><i class="d" style="left:755px;top:699px"></i><i class="d" style="left:755px;top:712px"></i><i class="d" style="left:755px;top:725px"></i><i class="d" style="left:755px;top:738px"></i><i class="d" style="left:755px;top:751px"></i><i class="d" style="left:768px;top:673px"></i><i class="d" style="left:768px;top:686px"></i><i class="d" style="left:768px;top:699px"></i><i class="d" style="left:768px;top:712px"></i><i class="d l4" style="left:768px;top:725px"></i><i class="d l1" style="left:768px;top:738px"></i><i class="d" style="left:768px;top:751px"></i><i class="d" style="left:781px;top:673px"></i><i class="d" style="left:781px;top:686px"></i><i class="d" style="left:781px;top:699px"></i><i class="d" style="left:781px;top:712px"></i><i class="d" style="left:781px;top:725px"></i><i class="d" style="left:781px;top:738px"></i><i class="d" style="left:781px;top:751px"></i><i class="d" style="left:794px;top:673px"></i><i class="d" style="left:794px;top:686px"></i><i class="d" style="left:794px;top:699px"></i><i class="d" style="left:794px;top:712px"></i><i class="d" style="left:794px;top:725px"></i><i class="d" style="left:794px;top:738px"></i><i class="d" style="left:794px;top:751px"></i><i class="d" style="left:807px;top:673px"></i><i class="d" style="left:807px;top:686px"></i><i class="d" style="left:807px;top:699px"></i><i class="d" style="left:807px;top:712px"></i><i class="d" style="left:807px;top:725px"></i><i class="d" style="left:807px;top:738px"></i><i class="d" style="left:807px;top:751px"></i><i class="d" style="left:820px;top:673px"></i><i class="d" style="left:820px;top:686px"></i><i class="d" style="left:820px;top:699px"></i><i class="d" style="left:820px;top:712px"></i><i class="d" style="left:820px;top:725px"></i><i class="d" style="left:820px;top:738px"></i><i class="d" style="left:820px;top:751px"></i><i class="d" style="left:833px;top:673px"></i><i class="d" style="left:833px;top:686px"></i><i class="d" style="left:833px;top:699px"></i><i class="d" style="left:833px;top:712px"></i><i class="d" style="left:833px;top:725px"></i><i class="d" style="left:833px;top:738px"></i><i class="d" style="left:833px;top:751px"></i><i class="d" style="left:846px;top:673px"></i><i class="d" style="left:846px;top:686px"></i><i class="d" style="left:846px;top:699px"></i><i class="d" style="left:846px;top:712px"></i><i class="d" style="left:846px;top:725px"></i><i class="d" style="left:846px;top:738px"></i><i class="d" style="left:846px;top:751px"></i><i class="d" style="left:859px;top:673px"></i><i class="d" style="left:859px;top:686px"></i><i class="d" style="left:859px;top:699px"></i><i class="d" style="left:859px;top:712px"></i><i class="d" style="left:859px;top:725px"></i><i class="d" style="left:859px;top:738px"></i><i class="d" style="left:859px;top:751px"></i><i class="d" style="left:872px;top:673px"></i><i class="d l2" style="left:872px;top:686px"></i><i class="d" style="left:872px;top:699px"></i><i class="d" style="left:872px;top:712px"></i><i class="d l1" style="left:872px;top:725px"></i><i class="d" style="left:872px;top:738px"></i><i class="d" style="left:872px;top:751px"></i><i class="d" style="left:885px;top:673px"></i><i class="d l4" style="left:885px;top:686px"></i><i class="d" style="left:885px;top:699px"></i><i class="d" style="left:885px;top:712px"></i><i class="d" style="left:885px;top:725px"></i><i class="d" style="left:885px;top:738px"></i><i class="d" style="left:885px;top:751px"></i><i class="d" style="left:898px;top:673px"></i><i class="d l1" style="left:898px;top:686px"></i><i class="d" style="left:898px;top:699px"></i><i class="d" style="left:898px;top:712px"></i><i class="d" style="left:898px;top:725px"></i><i class="d" style="left:898px;top:738px"></i><i class="d" style="left:898px;top:751px"></i><i class="d" style="left:911px;top:673px"></i><i class="d" style="left:911px;top:686px"></i><i class="d" style="left:911px;top:699px"></i><i class="d" style="left:911px;top:712px"></i><i class="d" style="left:911px;top:725px"></i><i class="d" style="left:911px;top:738px"></i><i class="d" style="left:911px;top:751px"></i><i class="d" style="left:924px;top:673px"></i><i class="d" style="left:924px;top:686px"></i><i class="d" style="left:924px;top:699px"></i><i class="d" style="left:924px;top:712px"></i><i class="d" style="left:924px;top:725px"></i><i class="d l2" style="left:924px;top:738px"></i><i class="d" style="left:924px;top:751px"></i><i class="d" style="left:937px;top:673px"></i><i class="d" style="left:937px;top:686px"></i><i class="d" style="left:937px;top:699px"></i><i class="d" style="left:937px;top:712px"></i><i class="d" style="left:937px;top:725px"></i><i class="d" style="left:937px;top:738px"></i><i class="d" style="left:937px;top:751px"></i><i class="d" style="left:950px;top:673px"></i><i class="d" style="left:950px;top:686px"></i><i class="d" style="left:950px;top:699px"></i><i class="d" style="left:950px;top:712px"></i><i class="d" style="left:950px;top:725px"></i><i class="d" style="left:950px;top:738px"></i><i class="d" style="left:950px;top:751px"></i><i class="d" style="left:963px;top:673px"></i><i class="d" style="left:963px;top:686px"></i><i class="d" style="left:963px;top:699px"></i><i class="d" style="left:963px;top:712px"></i><i class="d" style="left:963px;top:725px"></i><i class="d" style="left:963px;top:738px"></i><i class="d" style="left:963px;top:751px"></i><i class="d" style="left:976px;top:673px"></i><i class="d" style="left:976px;top:686px"></i><i class="d" style="left:976px;top:699px"></i><i class="d" style="left:976px;top:712px"></i><i class="d" style="left:976px;top:725px"></i><i class="d" style="left:976px;top:738px"></i><i class="d l3" style="left:976px;top:751px"></i><i class="d" style="left:989px;top:673px"></i><i class="d" style="left:989px;top:686px"></i><i class="d" style="left:989px;top:699px"></i><i class="d" style="left:989px;top:712px"></i><i class="d" style="left:989px;top:725px"></i><i class="d" style="left:989px;top:738px"></i><i class="d" style="left:989px;top:751px"></i><i class="d" style="left:1002px;top:673px"></i><i class="d l4" style="left:1002px;top:686px"></i><i class="d" style="left:1002px;top:699px"></i><i class="d" style="left:1002px;top:712px"></i><i class="d" style="left:1002px;top:725px"></i><i class="d" style="left:1002px;top:738px"></i><i class="d" style="left:1002px;top:751px"></i><i class="d" style="left:1015px;top:673px"></i><i class="d" style="left:1015px;top:686px"></i><i class="d" style="left:1015px;top:699px"></i><i class="d" style="left:1015px;top:712px"></i><i class="d" style="left:1015px;top:725px"></i><i class="d" style="left:1015px;top:738px"></i><i class="d" style="left:1015px;top:751px"></i><i class="d l2" style="left:1028px;top:673px"></i><i class="d l1" style="left:1028px;top:686px"></i><i class="d" style="left:1028px;top:699px"></i><i class="d" style="left:1028px;top:712px"></i><i class="d" style="left:1028px;top:725px"></i><i class="d" style="left:1028px;top:738px"></i><i class="d" style="left:1028px;top:751px"></i><i class="d l1" style="left:1041px;top:673px"></i><i class="d l1" style="left:1041px;top:686px"></i><i class="d" style="left:1041px;top:699px"></i><i class="d" style="left:1041px;top:712px"></i><i class="d" style="left:1041px;top:725px"></i><i class="d" style="left:1041px;top:738px"></i><i class="d" style="left:1041px;top:751px"></i><i class="d" style="left:1054px;top:673px"></i><i class="d" style="left:1054px;top:686px"></i><i class="d" style="left:1054px;top:699px"></i><i class="d l1" style="left:1054px;top:712px"></i><i class="d" style="left:1054px;top:725px"></i><i class="d" style="left:1054px;top:738px"></i><i class="d" style="left:1054px;top:751px"></i><i class="d" style="left:1067px;top:673px"></i><i class="d" style="left:1067px;top:686px"></i><i class="d" style="left:1067px;top:699px"></i><i class="d" style="left:1067px;top:712px"></i><i class="d" style="left:1067px;top:725px"></i><i class="d" style="left:1067px;top:738px"></i><i class="d" style="left:1067px;top:751px"></i><i class="d" style="left:1080px;top:673px"></i><i class="d" style="left:1080px;top:686px"></i><i class="d" style="left:1080px;top:699px"></i><i class="d l2" style="left:1080px;top:712px"></i><i class="d" style="left:1080px;top:725px"></i><i class="d" style="left:1080px;top:738px"></i><i class="d" style="left:1080px;top:751px"></i><i class="d" style="left:1093px;top:673px"></i><i class="d" style="left:1093px;top:686px"></i><i class="d" style="left:1093px;top:699px"></i><i class="d" style="left:1093px;top:712px"></i><i class="d" style="left:1093px;top:725px"></i><i class="d" style="left:1093px;top:738px"></i><i class="d" style="left:1093px;top:751px"></i><i class="d" style="left:1106px;top:673px"></i><i class="d" style="left:1106px;top:686px"></i><i class="d" style="left:1106px;top:699px"></i><i class="d" style="left:1106px;top:712px"></i><i class="d" style="left:1106px;top:725px"></i><i class="d l4" style="left:1106px;top:738px"></i><i class="d" style="left:1106px;top:751px"></i><i class="d" style="left:1119px;top:673px"></i><i class="d" style="left:1119px;top:686px"></i><i class="d" style="left:1119px;top:699px"></i><i class="d" style="left:1119px;top:712px"></i><i class="d" style="left:1119px;top:725px"></i><i class="d" style="left:1119px;top:738px"></i><i class="d l3" style="left:1119px;top:751px"></i><i class="d" style="left:1132px;top:673px"></i><i class="d" style="left:1132px;top:686px"></i><i class="d" style="left:1132px;top:699px"></i><i class="d" style="left:1132px;top:712px"></i><i class="d" style="left:1132px;top:725px"></i><i class="d" style="left:1132px;top:738px"></i><i class="d" style="left:1132px;top:751px"></i><i class="d" style="left:1145px;top:673px"></i><i class="d" style="left:1145px;top:686px"></i><i class="d" style="left:1145px;top:699px"></i><i class="d" style="left:1145px;top:712px"></i><i class="d" style="left:1145px;top:725px"></i><i class="d" style="left:1145px;top:738px"></i><i class="d" style="left:1145px;top:751px"></i><i class="d" style="left:1158px;top:673px"></i><i class="d" style="left:1158px;top:686px"></i><i class="d l3" style="left:1158px;top:699px"></i><i class="d" style="left:1158px;top:712px"></i><i class="d" style="left:1158px;top:725px"></i><i class="d" style="left:1158px;top:738px"></i><i class="d" style="left:1158px;top:751px"></i><i class="d" style="left:1171px;top:673px"></i><i class="d" style="left:1171px;top:686px"></i><i class="d" style="left:1171px;top:699px"></i><i class="d" style="left:1171px;top:712px"></i><i class="d l4" style="left:1171px;top:725px"></i><i class="d" style="left:1171px;top:738px"></i><i class="d" style="left:1171px;top:751px"></i><i class="d" style="left:1184px;top:673px"></i><i class="d" style="left:1184px;top:686px"></i><i class="d" style="left:1184px;top:699px"></i><i class="d" style="left:1184px;top:712px"></i><i class="d" style="left:1184px;top:725px"></i><i class="d" style="left:1184px;top:738px"></i><i class="d" style="left:1184px;top:751px"></i><i class="d" style="left:1197px;top:673px"></i><i class="d" style="left:1197px;top:686px"></i><i class="d" style="left:1197px;top:699px"></i><i class="d" style="left:1197px;top:712px"></i><i class="d" style="left:1197px;top:725px"></i><i class="d" style="left:1197px;top:738px"></i><i class="d" style="left:1197px;top:751px"></i><i class="d" style="left:1210px;top:673px"></i><i class="d" style="left:1210px;top:686px"></i><i class="d" style="left:1210px;top:699px"></i><i class="d" style="left:1210px;top:712px"></i><i class="d" style="left:1210px;top:725px"></i><i class="d" style="left:1210px;top:738px"></i><i class="d" style="left:1210px;top:751px"></i><i class="d" style="left:1223px;top:673px"></i><i class="d" style="left:1223px;top:686px"></i><i class="d" style="left:1223px;top:699px"></i><i class="d" style="left:1223px;top:712px"></i><i class="d" style="left:1223px;top:725px"></i><i class="d" style="left:1223px;top:738px"></i><i class="d" style="left:1223px;top:751px"></i><i class="d" style="left:1236px;top:673px"></i><i class="d" style="left:1236px;top:686px"></i><i class="d" style="left:1236px;top:699px"></i><i class="d" style="left:1236px;top:712px"></i><i class="d" style="left:1236px;top:725px"></i><i class="d" style="left:1236px;top:738px"></i><i class="d" style="left:1236px;top:751px"></i><i class="d l3" style="left:1249px;top:673px"></i><i class="d" style="left:1249px;top:686px"></i><i class="d" style="left:1249px;top:699px"></i><i class="d" style="left:1249px;top:712px"></i><i class="d" style="left:1249px;top:725px"></i><i class="d" style="left:1249px;top:738px"></i><i class="d" style="left:1249px;top:751px"></i><i class="d" style="left:1262px;top:673px"></i><i class="d" style="left:1262px;top:686px"></i><i class="d" style="left:1262px;top:699px"></i><i class="d" style="left:1262px;top:712px"></i><i class="d" style="left:1262px;top:725px"></i><i class="d" style="left:1262px;top:738px"></i><i class="d" style="left:1262px;top:751px"></i><i class="d" style="left:1275px;top:673px"></i><i class="d" style="left:1275px;top:686px"></i><i class="d" style="left:1275px;top:699px"></i><i class="d" style="left:1275px;top:712px"></i><i class="d" style="left:1275px;top:725px"></i><i class="d" style="left:1275px;top:738px"></i><i class="d" style="left:1275px;top:751px"></i><i class="d" style="left:1288px;top:673px"></i><i class="d" style="left:1288px;top:686px"></i><i class="d" style="left:1288px;top:699px"></i><i class="d" style="left:1288px;top:712px"></i><i class="d" style="left:1288px;top:725px"></i><i class="d" style="left:1288px;top:738px"></i><i class="d" style="left:1288px;top:751px"></i><i class="d" style="left:1301px;top:673px"></i><i class="d" style="left:1301px;top:686px"></i><i class="d" style="left:1301px;top:699px"></i><i class="d" style="left:1301px;top:712px"></i><i class="d" style="left:1301px;top:725px"></i><i class="d" style="left:1301px;top:738px"></i><i class="d" style="left:1301px;top:751px"></i><i class="d" style="left:1314px;top:673px"></i><i class="d" style="left:1314px;top:686px"></i><i class="d" style="left:1314px;top:699px"></i><i class="d" style="left:1314px;top:712px"></i><i class="d" style="left:1314px;top:725px"></i><i class="d" style="left:1314px;top:738px"></i><i class="d" style="left:1314px;top:751px"></i><i class="d" style="left:1327px;top:673px"></i><i class="d" style="left:1327px;top:686px"></i><i class="d" style="left:1327px;top:699px"></i><i class="d" style="left:1327px;top:712px"></i><i class="d" style="left:1327px;top:725px"></i><i class="d" style="left:1327px;top:738px"></i><i class="d" style="left:1327px;top:751px"></i><i class="d" style="left:1340px;top:673px"></i><i class="d" style="left:1340px;top:686px"></i><i class="d" style="left:1340px;top:699px"></i><i class="d" style="left:1340px;top:712px"></i><i class="d" style="left:1340px;top:725px"></i><i class="d" style="left:1340px;top:738px"></i><i class="d" style="left:1340px;top:751px"></i><i class="d" style="left:1353px;top:673px"></i><i class="d" style="left:1353px;top:686px"></i><i class="d" style="left:1353px;top:699px"></i><i class="d" style="left:1353px;top:712px"></i><i class="d" style="left:1353px;top:725px"></i><i class="d" style="left:1353px;top:738px"></i><i class="d" style="left:1353px;top:751px"></i><i class="d" style="left:1366px;top:673px"></i><i class="d" style="left:1366px;top:686px"></i><i class="d" style="left:1366px;top:699px"></i><i class="d" style="left:1366px;top:712px"></i><i class="d" style="left:1366px;top:725px"></i><i class="d" style="left:1366px;top:738px"></i><i class="d" style="left:1366px;top:751px"></i><i class="d" style="left:1379px;top:673px"></i><i class="d" style="left:1379px;top:686px"></i><i class="d" style="left:1379px;top:699px"></i><i class="d" style="left:1379px;top:712px"></i><i class="d" style="left:1379px;top:725px"></i><i class="d" style="left:1379px;top:738px"></i><i class="d" style="left:1379px;top:751px"></i>
<span class="t" id="t67" style="left:697.79px;top:771.62px;font-size:12.00px;color:#9198a1;transform:scaleX(1.0159);">Learn how we count contributions</span>
<span class="t" id="t68" style="left:1238.34px;top:771.62px;font-size:12.00px;color:#9198a1;transform:scaleX(0.9169);">Less</span>
<i class="d" style="left:1265px;top:772px"></i>
<i class="d l1" style="left:1279px;top:772px"></i>
<i class="d l2" style="left:1293px;top:772px"></i>
<i class="d l3" style="left:1307px;top:772px"></i>
<i class="d l4" style="left:1321px;top:772px"></i>
<span class="t" id="t69" style="left:1334.50px;top:771.62px;font-size:12.00px;color:#9198a1;transform:scaleX(1.0546);">More</span>
<span class="t" id="t70" style="left:656.79px;top:828.05px;font-size:16.00px;color:#f0f6fc;transform:scaleX(1.0333);">Contribution activity</span>
<span class="t" id="t71" style="left:1451.63px;top:618.12px;font-size:12.00px;color:#9198a1;transform:scaleX(0.9875);">2024</span>
<span class="t" id="t72" style="left:1451.62px;top:660.03px;font-size:12.00px;color:#9198a1;transform:scaleX(0.9947);">2023</span>
<span class="t" id="t73" style="left:1451.62px;top:744.12px;font-size:12.00px;color:#9198a1;transform:scaleX(0.9947);">2021</span>
<span class="t" id="t74" style="left:1451.67px;top:786.23px;font-size:12.00px;color:#9198a1;transform:scaleX(0.9944);">2020</span>
<div class="abs" style="left:1436px;top:690px;width:117px;height:34px;background:#1f6feb;border-radius:6px"></div>
<span class="t" id="t75" style="left:1451.63px;top:702.23px;font-size:12.00px;color:#ffffff;transform:scaleX(0.9950);">2022</span>
</body>
</html>
